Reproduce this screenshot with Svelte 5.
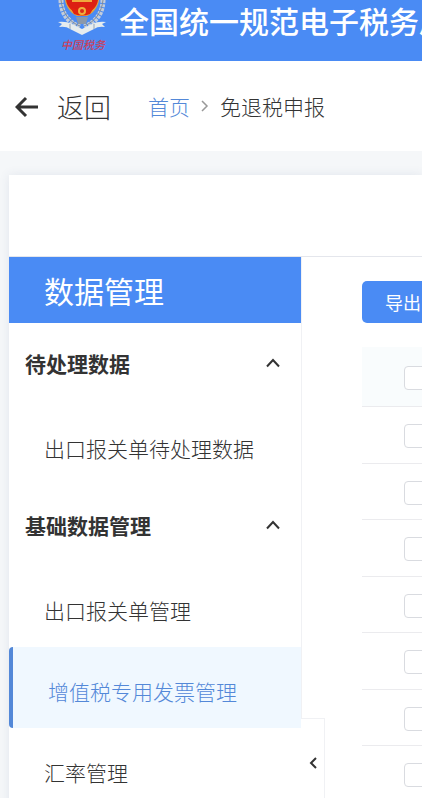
<script>
let collapsed = $state(false);
let active = $state('vat');

let groups = $state([
  {
    title: '待处理数据',
    open: true,
    items: [{ id: 'pending', label: '出口报关单待处理数据' }]
  },
  {
    title: '基础数据管理',
    open: true,
    items: [
      { id: 'customs', label: '出口报关单管理' },
      { id: 'vat', label: '增值税专用发票管理' },
      { id: 'rate', label: '汇率管理' }
    ]
  }
]);

let rows = $state(Array.from({ length: 8 }, () => ({ checked: false })));

function toggleAll(event) {
  rows.forEach((row) => (row.checked = event.target.checked));
}
</script>

<div class="page">
  <header class="banner">
    <svg class="emblem" viewBox="0 0 54 54" aria-hidden="true">
      <g fill="none" stroke="#c3cddb" stroke-width="5" stroke-dasharray="3 1">
        <path d="M6 0C6 12 12 22 25 27" />
        <path d="M48 0C48 12 42 22 29 27" />
      </g>
      <path d="M6 0C7 12 14 22 25 26M48 0C47 12 40 22 29 26" fill="none" stroke="#7f8c9c" stroke-width="1" />
      <path d="M10 0C11 8 17 14 22 16H32C37 14 43 8 44 0Z" fill="#e3a53c" />
      <path d="M11 0C12 7 17 11 22 13H32C37 11 42 7 43 0Z" fill="#dc2013" />
      <path d="M17 0H37V2H17Z" fill="#f0a83c" />
      <path d="M15 7Q27 13 39 7L35 14Q27 17 19 14Z" fill="#e2240f" />
      <circle cx="27" cy="11" r="4" fill="#f0b03c" />
      <circle cx="27" cy="11" r="2" fill="#d92b18" />
      <path d="M21 17H33L31 24H23Z" fill="#8a98aa" />
      <path d="M3 22Q11 21 17 24L27 29L37 24Q43 21 51 22L47 24L50 27Q43 26 39 29L27 35L15 29Q11 26 4 27L7 24Z" fill="#e6ecee" />
      <path d="M15 24V29M39 24V29" stroke="#93a4b8" stroke-width="1" />
      <text x="28" y="49" text-anchor="middle">中国税务</text>
    </svg>
    <h1>全国统一规范电子税务局</h1>
  </header>

  <nav class="crumbs" aria-label="面包屑">
    <button type="button" class="back">
      <svg width="24" height="24" viewBox="0 0 24 24" aria-hidden="true">
        <path d="M11 4L2 13L11 22M2 13H23" fill="none" stroke="currentColor" stroke-width="3" />
      </svg>
      <span>返回</span>
    </button>
    <a href="#home">首页</a>
    <svg class="sep" width="8" height="12" viewBox="0 0 8 12" aria-hidden="true">
      <path d="M1 1L6 6L1 11" fill="none" stroke="currentColor" stroke-width="1.5" />
    </svg>
    <span class="current">免退税申报</span>
  </nav>

  <div class="card">
    <div class="card-top"></div>
    <div class="card-body">
      <aside class="sidebar">
        {#if !collapsed}
          <h2>数据管理</h2>
          {#each groups as group}
            <button type="button" class="group" aria-expanded={group.open} onclick={() => (group.open = !group.open)}>
              <span>{group.title}</span>
              <svg class:closed={!group.open} width="16" height="10" viewBox="0 0 16 10" aria-hidden="true">
                <path d="M2 8.5L8 2L14 8.5" fill="none" stroke="currentColor" stroke-width="2" />
              </svg>
            </button>
            {#if group.open}
              {#each group.items as item}
                <a href={'#' + item.id} class="item" class:active={active === item.id} onclick={() => (active = item.id)}>{item.label}</a>
              {/each}
            {/if}
          {/each}
        {/if}
        <button type="button" class="handle" aria-label="收起菜单" onclick={() => (collapsed = !collapsed)}>
          <svg width="8" height="12" viewBox="0 0 8 12" aria-hidden="true">
            <path d="M7 1L2 6L7 11" fill="none" stroke="currentColor" stroke-width="2" />
          </svg>
        </button>
      </aside>

      <main class="content">
        <button type="button" class="export">导出</button>
        <table>
          <thead>
            <tr>
              <th><input type="checkbox" aria-label="全选" onchange={toggleAll} /></th>
            </tr>
          </thead>
          <tbody>
            {#each rows as row, i}
              <tr>
                <td><input type="checkbox" aria-label={'选择第' + (i + 1) + '行'} bind:checked={row.checked} /></td>
              </tr>
            {/each}
          </tbody>
        </table>
      </main>
    </div>
  </div>
</div>

<style>
:global(body) {
  margin: 0;
}

.page {
  height: 100vh;
  overflow: hidden;
  background: #f5f7f9;
  color: #333;
  font-family: "Noto Sans CJK SC", sans-serif;
  font-size: 21px;
  font-weight: 300;
}

button {
  border: 0;
  padding: 0;
  background: none;
  color: inherit;
  font: inherit;
  cursor: pointer;
}

a {
  text-decoration: none;
}

svg {
  flex: none;
}

/* Banner */
.banner {
  display: flex;
  align-items: flex-start;
  gap: 10px;
  height: 61px;
  padding-left: 55px;
  background: #4a8bf4;
  color: #fff;
}

.emblem {
  width: 54px;
  height: 54px;
}

.emblem text {
  fill: #c9405c;
  font-size: 11px;
  font-style: italic;
  font-weight: 500;
}

.banner h1 {
  margin: 0;
  font-size: 30px;
  font-weight: 500;
  line-height: 40px;
  white-space: nowrap;
}

/* Breadcrumb */
.crumbs {
  display: flex;
  align-items: center;
  height: 90px;
  padding-left: 15px;
  background: #fff;
  white-space: nowrap;
}

.back {
  display: flex;
  align-items: center;
  gap: 18px;
  margin-right: 37px;
  font-size: 27px;
}

.crumbs a {
  color: #5388d8;
}

.sep {
  margin: 0 11px;
  color: #999;
}

/* Card */
.card {
  margin: 24px 0 0 9px;
  background: #fff;
  box-shadow: 0 0 10px rgba(60, 80, 130, 0.1);
}

.card-top {
  height: 81px;
  border-bottom: 1px solid #e4e6ec;
}

.card-body {
  display: flex;
}

.sidebar {
  position: relative;
  flex: none;
  width: 292px;
  border-right: 1px solid #f0f1f4;
}

.sidebar h2 {
  margin: 0;
  padding-left: 35px;
  background: #4a8bf4;
  color: #fff;
  font-size: 30px;
  font-weight: 400;
  line-height: 66px;
}

.group {
  display: flex;
  align-items: center;
  justify-content: space-between;
  width: 100%;
  height: 81px;
  padding: 0 20px 2px 16px;
  font-weight: 700;
}

.closed {
  transform: rotate(180deg);
}

.item {
  display: flex;
  align-items: center;
  box-sizing: border-box;
  height: 81px;
  padding: 6px 0 0 35px;
  color: #333;
}

.item.active {
  border-left: 4px solid #5388d8;
  border-radius: 4px 0 0 4px;
  background: #f0f8ff;
  color: #5388d8;
}

.handle {
  position: absolute;
  top: 461px;
  left: 100%;
  display: flex;
  align-items: center;
  justify-content: center;
  box-sizing: border-box;
  width: 24px;
  height: 90px;
  border: 1px solid #f0f1f4;
  border-left: 0;
  background: #fff;
}

/* List */
.content {
  flex: 1;
  min-width: 0;
  padding: 24px 0 24px 60px;
}

.export {
  display: block;
  height: 42px;
  margin-bottom: 24px;
  padding: 0 23px;
  border-radius: 5px;
  background: #4a8bf4;
  color: #fff;
  font-size: 18px;
  font-weight: 400;
  white-space: nowrap;
}

table {
  width: 100%;
  border-collapse: separate;
  border-spacing: 0;
}

th,
td {
  box-sizing: border-box;
  height: 57px;
  padding: 2px 0 0 42px;
  border-bottom: 1px solid #ebebee;
  text-align: left;
  vertical-align: middle;
}

th {
  height: 60px;
  background: #f9fcfd;
}

tr:nth-child(even) td {
  height: 56px;
}

input {
  display: block;
  appearance: none;
  box-sizing: border-box;
  width: 24px;
  height: 24px;
  margin: 0;
  border: 1px solid #d9dbe0;
  border-radius: 4px;
  background: #fff;
}

input:checked {
  border-color: #4a8bf4;
  background: #4a8bf4;
}
</style>
